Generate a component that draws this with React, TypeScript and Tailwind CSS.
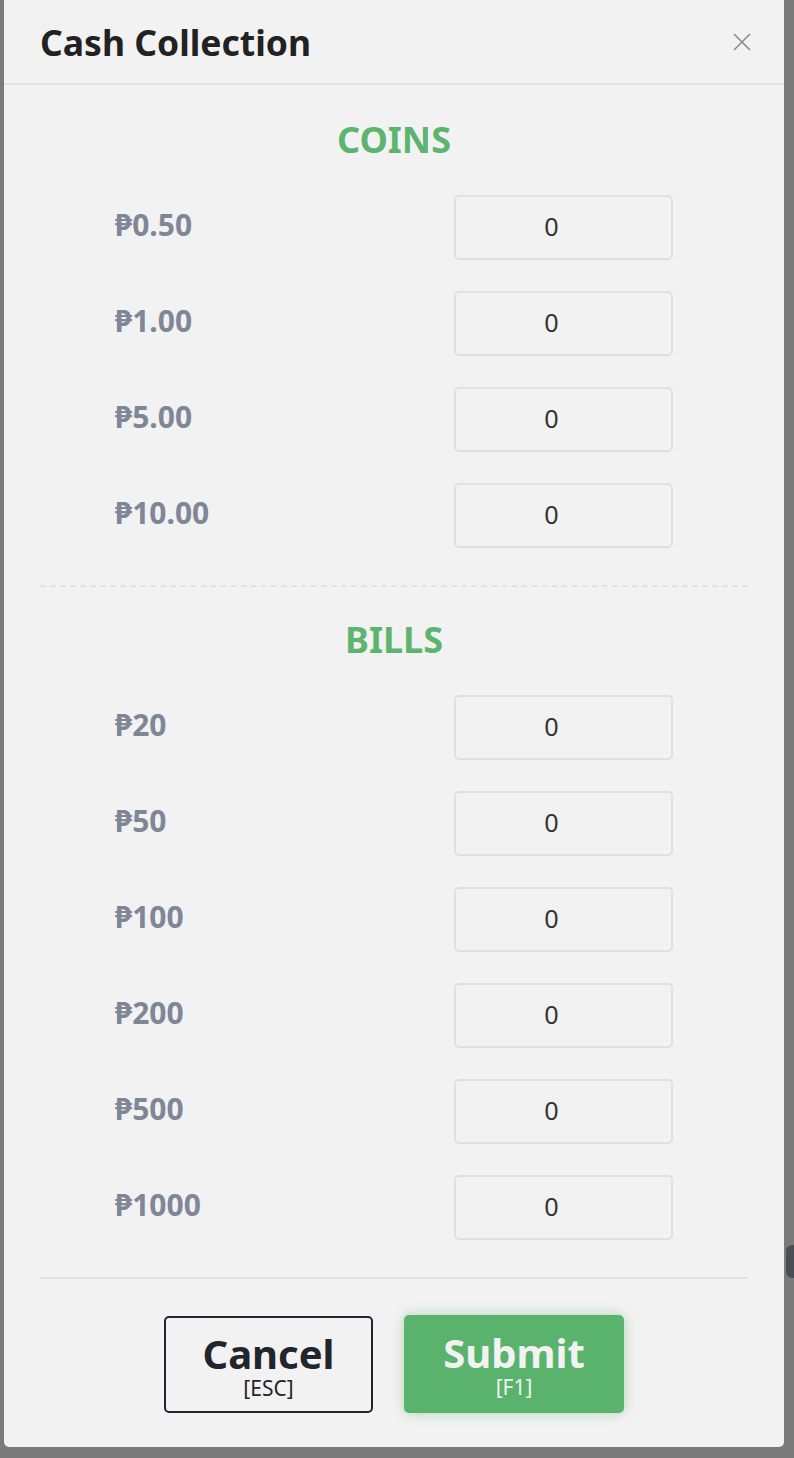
import React from "react"

const coins = ["₱0.50", "₱1.00", "₱5.00", "₱10.00"]
const bills = ["₱20", "₱50", "₱100", "₱200", "₱500", "₱1000"]

function DenominationRow({ label }: { label: string }) {
  return (
    <div className="flex items-center justify-between pl-[75px] pr-[75px]">
      <span className="text-[30px] leading-[40px] font-bold text-[#7f8796] -mt-[6px]">{label}</span>
      <input
        type="text"
        defaultValue="0"
        className="w-[219px] h-[65px] rounded-[5px] border-2 border-[#e0e0e0] bg-transparent pr-[24px] text-center text-[25px] text-[#333] font-['Liberation_Sans',sans-serif] outline-none"
      />
    </div>
  )
}

function Section({ title, items }: { title: string; items: string[] }) {
  return (
    <div>
      <h2 className="h-[40px] leading-[40px] text-center text-[36px] font-bold text-[#5cb46e]">{title}</h2>
      <div className="mt-[35px] flex flex-col gap-[31px]">
        {items.map((item) => (
          <DenominationRow key={item} label={item} />
        ))}
      </div>
    </div>
  )
}

export default function App() {
  return (
    <div className="relative w-[794px] h-[1458px] bg-[#7b7b7b] overflow-hidden font-['Noto_Sans',sans-serif]">
      {/* background hints behind the overlay */}
      <div className="absolute right-0 top-[1245px] w-[8px] h-[33px] rounded-l-md bg-[#4a4e56]"></div>

      <div className="absolute left-[4px] top-0 w-[780px] h-[1447px] bg-[#f2f2f2] rounded-b-[5px]">
        {/* Header */}
        <div className="h-[85px] flex items-center justify-between pl-[36px] pr-[32px] border-b-2 border-[#e4e4e4]">
          <h1 className="text-[35.5px] leading-[44px] font-bold text-[#222]">Cash Collection</h1>
          <button className="w-[20px] h-[20px] text-[#8a8a8a]">
            <svg viewBox="0 0 20 20" className="w-[20px] h-[20px]" stroke="currentColor" strokeWidth="1.6" fill="none">
              <path d="M2 2 L18 18 M18 2 L2 18" />
            </svg>
          </button>
        </div>

        <div className="px-[36px] pt-[35px]">
          <Section title="COINS" items={coins} />
          <div className="mt-[37px] border-t-2 border-dashed border-[#e2e2e2]"></div>
          <div className="mt-[33px]">
            <Section title="BILLS" items={bills} />
          </div>
          <div className="mt-[37px] border-t-2 border-[#e2e2e2]"></div>
        </div>

        {/* Footer buttons */}
        <div className="mt-[36px] flex justify-center gap-[31px]">
          <button className="w-[209px] h-[97px] mt-[1px] rounded-[5px] border-2 border-[#22252b] flex flex-col items-center justify-center">
            <span className="block text-[40px] leading-[46px] font-bold text-[#22252b]">Cancel</span>
            <span className="block text-[21px] leading-[22px] text-[#22252b]">[ESC]</span>
          </button>
          <button className="w-[220px] h-[98px] rounded-[5px] bg-[#59b36d] shadow-[0_0_12px_rgba(89,179,109,0.45)] flex flex-col items-center justify-center">
            <span className="block text-[40px] leading-[46px] font-bold text-[#f2f2f2]">Submit</span>
            <span className="block text-[21px] leading-[22px] text-[#f2f2f2]">[F1]</span>
          </button>
        </div>
      </div>
    </div>
  )
}
